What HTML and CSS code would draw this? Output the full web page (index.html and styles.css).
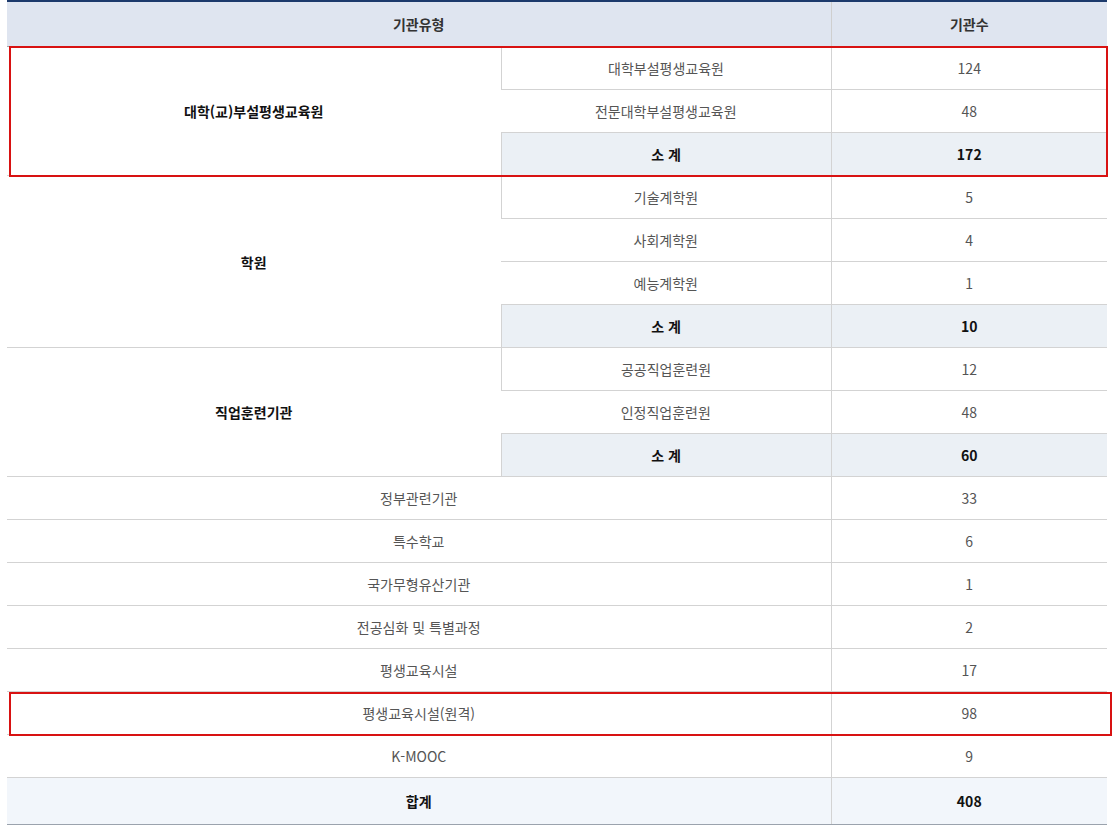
FILE: index.html
```html
<!DOCTYPE html>
<html lang="ko">
<head>
<meta charset="utf-8">
<title>기관유형별 기관수</title>
<link rel="stylesheet" href="styles.css">
</head>
<body>
<div class="wrap">
  <table class="stat">
    <colgroup>
      <col class="c1">
      <col class="c2">
      <col class="c3">
    </colgroup>
    <thead>
      <tr><th colspan="2">기관유형</th><th>기관수</th></tr>
    </thead>
    <tbody>
      <tr><td rowspan="3" class="group">대학(교)부설평생교육원</td><td>대학부설평생교육원</td><td>124</td></tr>
      <tr><td>전문대학부설평생교육원</td><td>48</td></tr>
      <tr class="sub"><td>소 계</td><td>172</td></tr>

      <tr><td rowspan="4" class="group">학원</td><td>기술계학원</td><td>5</td></tr>
      <tr><td>사회계학원</td><td>4</td></tr>
      <tr><td>예능계학원</td><td>1</td></tr>
      <tr class="sub"><td>소 계</td><td>10</td></tr>

      <tr><td rowspan="3" class="group">직업훈련기관</td><td>공공직업훈련원</td><td>12</td></tr>
      <tr><td>인정직업훈련원</td><td>48</td></tr>
      <tr class="sub"><td>소 계</td><td>60</td></tr>

      <tr><td colspan="2">정부관련기관</td><td>33</td></tr>
      <tr><td colspan="2">특수학교</td><td>6</td></tr>
      <tr><td colspan="2">국가무형유산기관</td><td>1</td></tr>
      <tr><td colspan="2">전공심화 및 특별과정</td><td>2</td></tr>
      <tr><td colspan="2">평생교육시설</td><td>17</td></tr>
      <tr><td colspan="2">평생교육시설(원격)</td><td>98</td></tr>
      <tr><td colspan="2">K-MOOC</td><td>9</td></tr>
    </tbody>
    <tfoot>
      <tr><td colspan="2">합계</td><td>408</td></tr>
    </tfoot>
  </table>
  <div class="mark mark-a"></div>
  <div class="mark mark-b"></div>
</div>
</body>
</html>
```

FILE: styles.css
```css
html, body {
  margin: 0;
  padding: 0;
  background: #ffffff;
}

body {
  font-family: "Noto Sans CJK KR", "Noto Sans", "Liberation Sans", sans-serif;
  font-size: 14px;
  color: #555555;
}

.wrap {
  position: relative;
  width: 1100px;
  margin-left: 7px;
}

.stat {
  width: 1100px;
  border-collapse: collapse;
  table-layout: fixed;
  border-top: 2px solid #1c3a6c;
}

.c1 { width: 494px; }
.c2 { width: 330px; }
.c3 { width: 276px; }

.stat th {
  height: 44px;
  padding: 0;
  background: #dfe5f0;
  color: #333333;
  font-weight: 700;
  font-size: 14px;
  text-align: center;
  vertical-align: middle;
  border-bottom: 1px solid #a9a9a9;
  border-left: 1px solid #cfcfcf;
}

.stat th:first-child {
  border-left: none;
}

.stat td {
  height: 42px;
  padding: 0;
  text-align: center;
  vertical-align: middle;
  border-bottom: 1px solid #d3d3d3;
  border-left: 1px solid #d3d3d3;
}

.stat tbody tr > td:first-child {
  border-left: none;
}

.stat tbody tr.sub > td:first-child {
  border-left: 1px solid #d3d3d3;
}

.stat td.group {
  color: #111111;
  font-weight: 700;
}

.stat tr.sub td {
  background: #ebf0f5;
  color: #111111;
  font-weight: 700;
}

.stat tfoot td {
  height: 46px;
  background: #f2f6fb;
  color: #111111;
  font-weight: 700;
  border-top: 1px solid #9ba3ad;
  border-bottom: 1px solid #9ba3ad;
}

.stat tfoot td:first-child {
  border-left: none;
}

.mark {
  position: absolute;
  border: 2px solid #d81212;
  box-sizing: border-box;
  pointer-events: none;
}

.mark-a {
  left: 2px;
  top: 46px;
  width: 1099px;
  height: 131px;
}

.mark-b {
  left: 2px;
  top: 692px;
  width: 1103px;
  height: 44px;
}
```
